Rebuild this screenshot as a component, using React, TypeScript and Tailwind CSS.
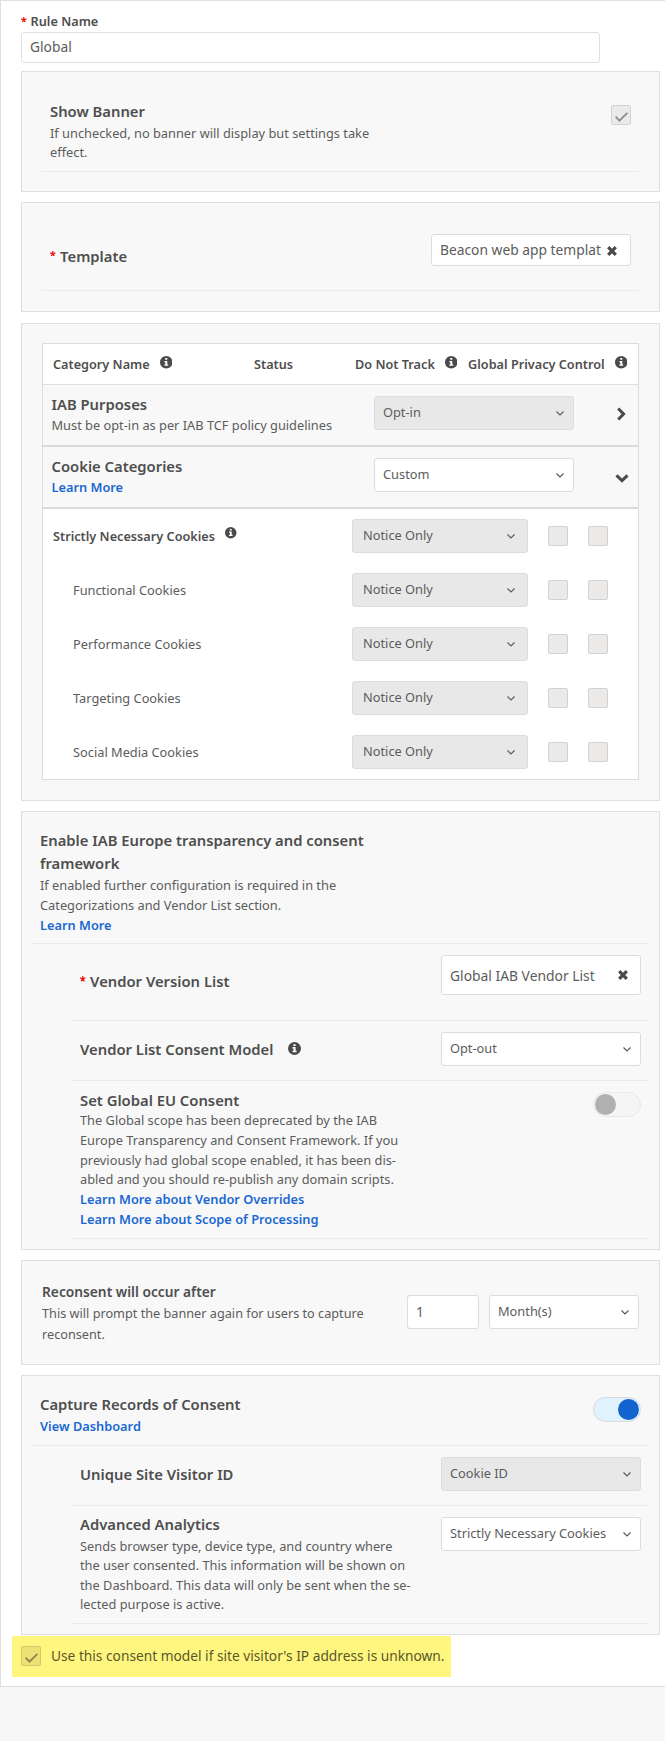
import type { ReactNode } from "react";

const title = "text-[14.8px] leading-5 font-semibold text-[#4e4e4e] whitespace-nowrap";
const body = "text-[12.8px] text-[#5c5c5c] whitespace-nowrap";
const link = "font-semibold text-[12.8px] text-[#1a69d3] whitespace-nowrap";
const small = "text-[12.7px] leading-5 font-semibold text-[#4e4e4e] whitespace-nowrap";

function Info({ size = "size-[12.5px]" }: { size?: string }) {
  return (
    <svg viewBox="0 0 12 12" className={`${size} shrink-0`}>
      <circle cx="6" cy="6" r="6" fill="#4a4a4a" />
      <path d="M5 2h2v1.6H5zM4.2 4.7h2.8v3.4h.9v1.3H4.2V8.100h.9V6h-.9z" fill="#fff" />
    </svg>
  );
}

function Star() {
  return (
    <svg viewBox="0 0 10 10" className="h-[5.6px] w-[5.6px] shrink-0" stroke="#ee1111" strokeWidth="2.2">
      <path d="M5 5V0M5 5L.3 3.500M5 5L9.700 3.500M5 5L2 9.500M5 5L8 9.500" fill="none" />
    </svg>
  );
}

function Clear() {
  return (
    <svg viewBox="0 0 10 10" className="h-[10px] w-[10px] shrink-0" stroke="#4a4a4a" strokeWidth="3.2" fill="none">
      <path d="M1.200 1.200L8.800 8.800M8.800 1.200L1.200 8.800" />
    </svg>
  );
}

function Caret() {
  return (
    <svg viewBox="0 0 8 5" className="h-[5px] w-2 shrink-0" fill="none" stroke="#5a5a5a" strokeWidth="1.2">
      <path d="M.5 .5L4 4L7.500 .5" />
    </svg>
  );
}

function Tick({ color }: { color: string }) {
  return (
    <svg viewBox="0 0 13 10" className="mt-[3px] h-[10px] w-[13px]" fill="none" stroke={color} strokeWidth="1.8">
      <path d="M.6 4.700L4.500 8.700L12.400 .8" />
    </svg>
  );
}

function Select({ value, width = "w-[200px]", pad = "pl-2 pr-2", disabled = false }: { value: string; width?: string; pad?: string; disabled?: boolean }) {
  return (
    <div
      className={`flex h-[34px] shrink-0 items-center justify-between rounded-[3px] border border-[#dcdcdc] ${width} ${pad} ${disabled ? "bg-[#e8e8e8]" : "bg-white"}`}
    >
      <span className={`${body} pb-[2px] leading-5`}>{value}</span>
      <span className="flex pt-px pr-px">
        <Caret />
      </span>
    </div>
  );
}

function Box({ children }: { children?: ReactNode }) {
  return (
    <div className="flex size-5 shrink-0 items-center justify-center rounded-[2px] border border-[#d2d2d2] bg-[#ebeae9]">{children}</div>
  );
}

function Toggle({ on = false }: { on?: boolean }) {
  return (
    <div
      className={`flex h-[25px] w-12 shrink-0 items-center rounded-full border px-px ${on ? "justify-end border-[#dadada] bg-[#e0f2fe]" : "border-[#e9e9e9] bg-[#f5f5f5]"}`}
    >
      <div className={`size-[21px] rounded-full ${on ? "bg-[#1264d1]" : "bg-[#b0b0b0]"}`} />
    </div>
  );
}

function Panel({ className, children }: { className: string; children: ReactNode }) {
  return <section className={`ml-5 w-[639px] border border-[#dfdfdf] bg-[#f8f8f8] ${className}`}>{children}</section>;
}

function Row({ className, children }: { className: string; children: ReactNode }) {
  return <div className={`flex items-start justify-between border-b border-[#ebebeb] px-2 ${className}`}>{children}</div>;
}

const cookies = ["Strictly Necessary Cookies", "Functional Cookies", "Performance Cookies", "Targeting Cookies", "Social Media Cookies"];

export default function App() {
  return (
    <div className="h-[1741px] w-[665px] overflow-hidden bg-[#f7f7f7] font-['Noto_Sans',sans-serif]">
      <main className="h-[1687px] border-t border-b border-l border-[#dfdfdf] bg-white">
        <div className="flex h-[31px] items-start pl-5 pt-[9.500px]">
          <div className="pt-[6px]">
            <Star />
          </div>
          <span className={`${small} ml-[4px]`}>Rule Name</span>
        </div>
        <div className="ml-5 flex h-[31px] w-[579px] items-center rounded-[3px] border border-[#e0e0e0] pl-2">
          <span className="pb-px text-[13.800px] leading-5 text-[#5c5c5c]">Global</span>
        </div>

        <Panel className="mt-2 h-[121px]">
          <Row className="mx-5 h-[100px]">
            <div className="pt-[29px]">
              <h2 className={title}>Show Banner</h2>
              <p className={`${body} mt-[2.800px] leading-[19.300px]`}>
                If unchecked, no banner will display but settings take
                <br />
                effect.
              </p>
            </div>
            <div className="pt-[33px]">
              <Box>
                <Tick color="#8c8c8c" />
              </Box>
            </div>
          </Row>
        </Panel>

        <Panel className="mt-[10px] h-[110px]">
          <Row className="mx-5 h-[88px]">
            <div className="flex pt-[42.500px]">
              <div className="pt-[5px]">
                <Star />
              </div>
              <h2 className={`${title} ml-[4.500px]`}>Template</h2>
            </div>
            <div className="mt-[31px] flex h-8 w-[200px] items-center rounded-[3px] border border-[#dcdcdc] bg-white pl-2">
              <span className="pb-px text-[13.800px] leading-5 whitespace-nowrap text-[#5c5c5c]">Beacon web app templat</span>
              <span className="ml-[6px] flex pt-px">
                <Clear />
              </span>
            </div>
          </Row>
        </Panel>

        <Panel className="mt-[11px] h-[478px]">
          <div className="mx-5 mt-[19px] h-[437px] border border-[#dcdcdc] bg-white">
            <div className="flex h-[41px] border-b border-[#dfdfdf] pt-[10px] pl-[10px]">
              <div className="flex w-[201px] gap-[10px]">
                <span className={small}>Category Name</span>
                <span className="pt-[2px]">
                  <Info />
                </span>
              </div>
              <span className={`${small} w-[101px]`}>Status</span>
              <div className="flex w-[113px] gap-[10px]">
                <span className={small}>Do Not Track</span>
                <span className="pt-[2px]">
                  <Info />
                </span>
              </div>
              <div className="flex gap-[10px]">
                <span className={small}>Global Privacy Control</span>
                <span className="pt-[2px]">
                  <Info />
                </span>
              </div>
            </div>

            <div className="flex h-[62px] items-start border-b-2 border-[#dadada] bg-[#f8f8f8] pl-[8.500px]">
              <div className="w-[322.500px] pt-[8.500px]">
                <h3 className={title}>IAB Purposes</h3>
                <p className={`${body} mt-[1.500px] leading-5`}>Must be opt-in as per IAB TCF policy guidelines</p>
              </div>
              <div className="pt-[11px]">
                <Select value="Opt-in" disabled />
              </div>
              <svg viewBox="0 0 9 14" className="mt-[22px] ml-[43px] h-[14px] w-[9px]" fill="none" stroke="#4a4a4a" strokeWidth="3">
                <path d="M1.200 1.500L6.600 7L1.200 12.500" />
              </svg>
            </div>
            <div className="flex h-[62px] items-start border-b-2 border-[#dadada] bg-[#f8f8f8] pl-[8.500px]">
              <div className="w-[322.500px] pt-[8.500px]">
                <h3 className={title}>Cookie Categories</h3>
                <p className={`${link} mt-[1.500px] leading-5`}>Learn More</p>
              </div>
              <div className="pt-[11px]">
                <Select value="Custom" />
              </div>
              <svg viewBox="0 0 14 9" className="mt-[27px] ml-[40.500px] h-[9px] w-[14px]" fill="none" stroke="#4a4a4a" strokeWidth="3">
                <path d="M1.500 1.400L7 6.700L12.500 1.400" />
              </svg>
            </div>

            <div className="pt-[10px]">
              {cookies.map((name, i) => (
                <div key={name} className="flex h-[54px] items-start">
                  <div className={`flex w-[309px] gap-[10px] pt-[7px] ${i === 0 ? "pl-[10px]" : "pl-[30px]"}`}>
                    <span className={i === 0 ? small : `${body} leading-5`}>{name}</span>
                    {i === 0 && (
                      <span className="pt-px">
                        <Info size="size-[11.500px]" />
                      </span>
                    )}
                  </div>
                  <Select value="Notice Only" width="w-44" pad="pl-[10px] pr-[11px]" disabled />
                  <div className="ml-5 flex gap-5 pt-[7px]">
                    <Box />
                    <Box />
                  </div>
                </div>
              ))}
            </div>
          </div>
        </Panel>

        <Panel className="mt-[10px] h-[439px]">
          <Row className="mx-[10px] h-[132px]">
            <div className="pt-[17px]">
              <h2 className="text-[14.800px] leading-[23px] font-semibold text-[#4e4e4e]">
                Enable IAB Europe transparency and consent
                <br />
                framework
              </h2>
              <p className={`${body} -mt-[.5px] leading-5`}>
                If enabled further configuration is required in the
                <br />
                Categorizations and Vendor List section.
              </p>
              <p className={`${link} leading-5`}>Learn More</p>
            </div>
          </Row>
          <Row className="mr-[10px] ml-[50px] h-[77px]">
            <div className="flex pt-[27px]">
              <div className="pt-[5px]">
                <Star />
              </div>
              <h2 className={`${title} ml-[4.500px]`}>Vendor Version List</h2>
            </div>
            <div className="mt-[11px] flex h-10 w-[200px] items-center justify-between rounded-[3px] border border-[#dcdcdc] bg-white pr-[12.500px] pl-2">
              <span className="pt-px text-[13.850px] leading-5 text-[#5c5c5c]">Global IAB Vendor List</span>
              <Clear />
            </div>
          </Row>
          <Row className="mr-[10px] ml-[50px] h-[60px]">
            <div className="flex gap-[15px] pt-[18px]">
              <h2 className={title}>Vendor List Consent Model</h2>
              <span className="pt-[3px]">
                <Info size="size-[13px]" />
              </span>
            </div>
            <div className="pt-[11px]">
              <Select value="Opt-out" />
            </div>
          </Row>
          <Row className="mr-[10px] ml-[50px] h-[158px]">
            <div className="pt-[9px]">
              <h2 className={title}>Set Global EU Consent</h2>
              <p className={`${body} mt-px leading-[19.800px]`}>
                The Global scope has been deprecated by the IAB
                <br />
                Europe Transparency and Consent Framework. If you
                <br />
                previously had global scope enabled, it has been dis-
                <br />
                abled and you should re-publish any domain scripts.
              </p>
              <p className={`${link} leading-[19.800px]`}>
                Learn More about Vendor Overrides
                <br />
                Learn More about Scope of Processing
              </p>
            </div>
            <div className="pt-[11px]">
              <Toggle />
            </div>
          </Row>
        </Panel>

        <Panel className="mt-[10px] flex h-[105px] justify-between px-5">
          <div className="pt-[20.500px]">
            <h2 className="text-[13.750px] leading-5 font-semibold text-[#4e4e4e]">Reconsent will occur after</h2>
            <p className="mt-[1.300px] text-[12.700px] leading-[20.800px] whitespace-nowrap text-[#5c5c5c]">
              This will prompt the banner again for users to capture
              <br />
              reconsent.
            </p>
          </div>
          <div className="flex gap-[10px] pt-[34px]">
            <div className="flex h-[34px] w-[72px] items-center rounded-[3px] border border-[#dcdcdc] bg-white pt-px pl-2 text-[13.800px] text-[#5c5c5c]">1</div>
            <Select value="Month(s)" width="w-[150px]" />
          </div>
        </Panel>

        <Panel className="mt-[10px] h-[260px]">
          <Row className="mx-[10px] h-[70px]">
            <div className="pt-[18px]">
              <h2 className={title}>Capture Records of Consent</h2>
              <p className={`${link} mt-[1.500px] leading-5`}>View Dashboard</p>
            </div>
            <div className="pt-[21px]">
              <Toggle on />
            </div>
          </Row>
          <Row className="mr-[10px] ml-[50px] h-[60px]">
            <h2 className={`${title} pt-[18px]`}>Unique Site Visitor ID</h2>
            <div className="pt-[11px]">
              <Select value="Cookie ID" disabled />
            </div>
          </Row>
          <Row className="mr-[10px] ml-[50px] h-[118px]">
            <div className="pt-2">
              <h2 className={title}>Advanced Analytics</h2>
              <p className={`${body} mt-[2.800px] leading-[19.500px]`}>
                Sends browser type, device type, and country where
                <br />
                the user consented. This information will be shown on
                <br />
                the Dashboard. This data will only be sent when the se-
                <br />
                lected purpose is active.
              </p>
            </div>
            <div className="pt-[11px]">
              <Select value="Strictly Necessary Cookies" />
            </div>
          </Row>
        </Panel>

        <div className="mt-px ml-[11px] flex h-[41px] w-[439px] items-start gap-[10px] bg-[#fff67f] pt-[10px] pl-[9px]">
          <div className="flex size-5 shrink-0 items-center justify-center rounded-[2px] border border-[#d2c869] bg-[#ebe175]">
            <Tick color="#8c8646" />
          </div>
          <span className="text-[13.730px] leading-5 whitespace-nowrap text-[#5a562c]">Use this consent model if site visitor's IP address is unknown.</span>
        </div>
      </main>
    </div>
  );
}
